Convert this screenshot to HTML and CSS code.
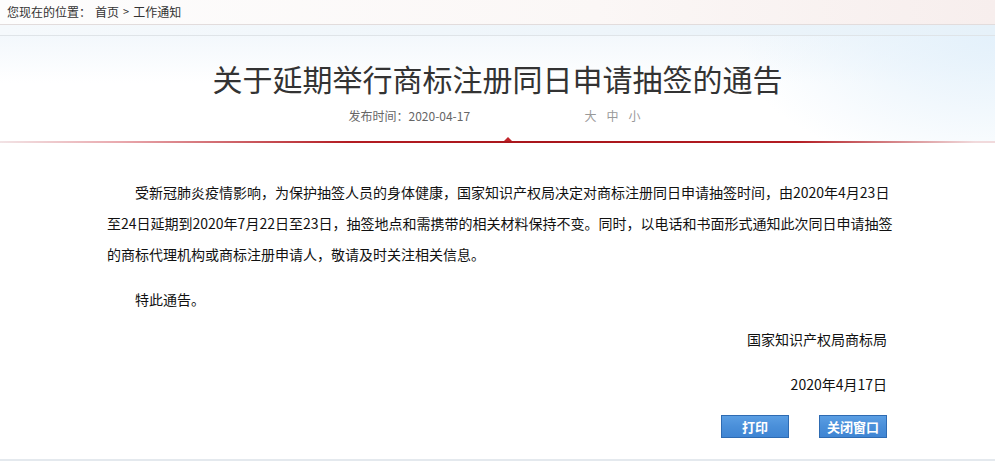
FILE: index.html
```html
<!DOCTYPE html>
<html lang="zh-CN">
<head>
<meta charset="utf-8">
<title>关于延期举行商标注册同日申请抽签的通告</title>
<link rel="stylesheet" href="styles.css">
</head>
<body>
<div class="crumb">
  <span class="crumb-label">您现在的位置：</span>
  <a class="crumb-link">首页</a>
  <span class="crumb-sep">&gt;</span>
  <a class="crumb-link">工作通知</a>
</div>
<div class="strip"></div>
<header class="head">
  <h1 class="title">关于延期举行商标注册同日申请抽签的通告</h1>
  <div class="meta">
    <span class="date">发布时间：2020-04-17</span>
    <span class="sizes"><a>大</a><a>中</a><a>小</a></span>
  </div>
</header>
<div class="rule"><span class="tri"></span></div>
<main class="content">
  <p class="para">受新冠肺炎疫情影响，为保护抽签人员的身体健康，国家知识产权局决定对商标注册同日申请抽签时间，由2020年4月23日至24日延期到2020年7月22日至23日，抽签地点和需携带的相关材料保持不变。同时，以电话和书面形式通知此次同日申请抽签的商标代理机构或商标注册申请人，敬请及时关注相关信息。</p>
  <p class="para">特此通告。</p>
  <p class="sign sign-name">国家知识产权局商标局</p>
  <p class="sign sign-date">2020年4月17日</p>
  <div class="actions">
    <button class="btn">打印</button>
    <button class="btn">关闭窗口</button>
  </div>
</main>
<div class="foot"></div>
</body>
</html>
```

FILE: styles.css
```css
* { box-sizing: border-box; }
html, body { margin: 0; padding: 0; }
body {
  width: 995px;
  height: 461px;
  overflow: hidden;
  background: #fff;
  font-family: "Noto Sans CJK SC", "Microsoft YaHei", sans-serif;
  color: #333;
  position: relative;
}
.crumb {
  height: 25px;
  display: flex;
  align-items: center;
  padding: 0 0 2px 7px;
  font-size: 12px;
  color: #333;
  background: linear-gradient(90deg, #fdfdfd 0%, #fbf7f6 60%, #f7eeed 100%);
  border-bottom: 1px solid #e2dcdc;
}
.crumb-label { margin-right: 4px; }
.crumb-link { color: #333; }
.crumb-sep { margin: 0 4px; font-size: 11px; }
.strip {
  height: 11px;
  background: linear-gradient(90deg, #f5f9fc 0%, #eef5fa 60%, #e6f1f9 100%);
  border-bottom: 1px solid #dfe4e8;
}
.head {
  height: 105px;
  background:
    radial-gradient(ellipse 260px 140px at 100% 0%, #e4f1fb 0%, rgba(228,241,251,0.6) 45%, rgba(255,255,255,0) 100%),
    linear-gradient(180deg, #f3f8fc 0%, #ffffff 45%);
  display: flex;
  flex-direction: column;
  align-items: center;
}
.title {
  margin: 25px 0 0;
  font-size: 30px;
  font-weight: normal;
  line-height: 34px;
  color: #333;
}
.meta {
  margin-top: 12px;
  font-size: 12px;
  color: #666;
  display: flex;
  width: 300px;
  transform: translateX(1px);
}
.date { width: 236px; }
.sizes { display: flex; gap: 10px; color: #999; }
.sizes a { color: #999; }
.rule {
  height: 2px;
  background: linear-gradient(90deg, #f2e3e5 0%, #e9a9ae 12%, #b31c22 35%, #a8151b 55%, #b31c22 80%, #f1dadc 98%);
  position: relative;
}
.tri {
  position: absolute;
  left: 504px;
  top: -4px;
  width: 0;
  height: 0;
  border-left: 4px solid transparent;
  border-right: 4px solid transparent;
  border-bottom: 4px solid #c2242a;
}
.content {
  width: 788px;
  margin: 0 0 0 107px;
  padding-top: 34px;
  font-size: 14px;
  color: #111;
}
.para {
  margin: 0 0 14px;
  line-height: 31px;
  text-indent: 28px;
}
.sign {
  margin: 0;
  text-align: right;
  padding-right: 8px;
  line-height: 21px;
}
.sign-name { margin-top: 0; }
.sign-date { margin-top: 24px; }
.actions {
  display: flex;
  justify-content: flex-end;
  gap: 30px;
  padding-right: 8px;
  margin-top: 20px;
}
.btn {
  width: 68px;
  height: 23px;
  padding: 0;
  border: 1px solid #2e6bb2;
  background: linear-gradient(180deg, #5a9ee3 0%, #4a8fd9 50%, #3f85d3 100%);
  color: #fff;
  font-family: "Noto Sans CJK SC", sans-serif;
  font-size: 13px;
  font-weight: bold;
  line-height: 20px;
  cursor: pointer;
}
.foot {
  position: absolute;
  left: 0;
  right: 0;
  bottom: 0;
  height: 2px;
  background: #e4e9ee;
}
```
